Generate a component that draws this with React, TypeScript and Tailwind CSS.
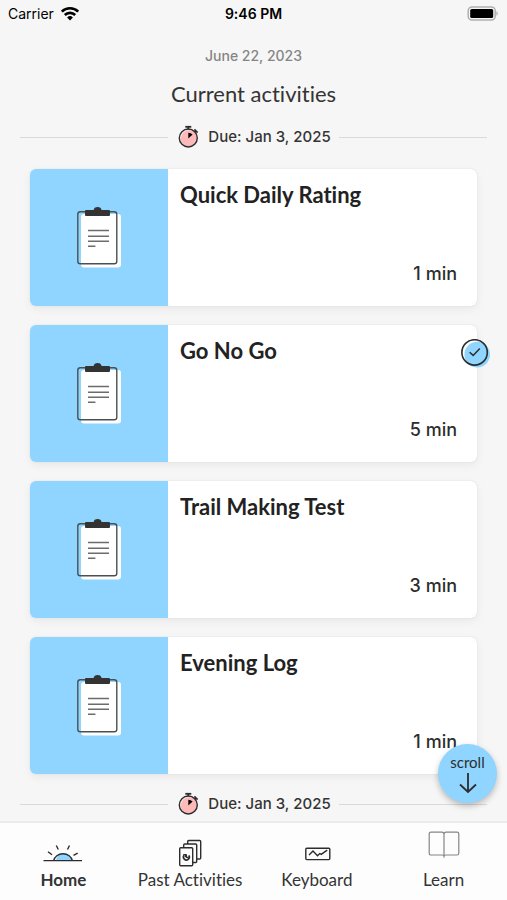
import React from 'react';
import clsx from 'clsx';

interface Activity {
  title: string;
  minutes: number;
  done?: boolean;
}

const activities: Activity[] = [
  { title: 'Quick Daily Rating', minutes: 1 },
  { title: 'Go No Go', minutes: 5, done: true },
  { title: 'Trail Making Test', minutes: 3 },
  { title: 'Evening Log', minutes: 1 },
];

const WifiIcon = () => (
  <svg className="w-5 h-4" viewBox="0 0 20 16" fill="none" stroke="#000" strokeWidth="2.6">
    <path d="M1.8 5.7a11.6 11.6 0 0 1 16.4 0" />
    <path d="M4.8 9a7.4 7.4 0 0 1 10.4 0" />
    <path d="M10 14.4 7.1 11.500a4.200 4.200 0 0 1 5.800 0z" fill="#000" stroke="none" />
  </svg>
);

const BatteryIcon = () => (
  <svg className="w-8 h-4" viewBox="0 0 32 16">
    <rect x="1.2" y="1" width="27" height="13" rx="3.8" fill="#f6f6f6" stroke="#b0b0b0" strokeWidth="1.5" />
    <rect x="3.2" y="3" width="23" height="9" rx="1.6" fill="#000" />
    <path d="M29.4 5.3c1.8.5 1.8 3.900 0 4.400z" fill="#b0b0b0" />
  </svg>
);

const StopwatchIcon = () => (
  <svg className="w-6 h-6" viewBox="0 0 24 24" fill="none">
    <circle cx="13" cy="13.500" r="8.300" fill="#ffb9b9" />
    <circle cx="12.300" cy="13" r="9" stroke="#2d2d2d" strokeWidth="1.4" />
    <path d="M9.300 1.800h6" stroke="#2d2d2d" strokeWidth="1.8" />
    <path d="M12.300 1.800v2.400M18.400 4.400l3.200 3.200M18.500 7l1.500-1.500" stroke="#2d2d2d" strokeWidth="1.7" />
    <path d="M12.300 13.400V7.800a6 6 0 0 1 4.300 1.800z" fill="#000" />
  </svg>
);

const ClipboardIcon = () => (
  <svg className="w-[46px] h-[62px]" viewBox="0 1 46 62" fill="none">
    <rect x="5" y="8" width="40" height="53.500" rx="3" fill="#fff" />
    <rect x="1.800" y="5.800" width="39" height="52" rx="2.600" stroke="#4a4f50" strokeWidth="1.4" />
    <path d="M10 4h7.6c.4-2 1.600-3 4-3s3.600 1 4 3H33a1 1 0 0 1 1 1v4a1 1 0 0 1-1 1H10a1 1 0 0 1-1-1V5a1 1 0 0 1 1-1z" fill="#333" />
    <path d="M12 24.500h21M12 30.200h21M12 35.300h21M12 40.300h7.400" stroke="#6c6c6c" strokeWidth="1.600" />
  </svg>
);

const DoneBadge = () => (
  <svg className="w-[30px] h-[30px]" viewBox="0 0 30 30" fill="none">
    <circle cx="16.200" cy="15.600" r="12.800" fill="#8fd5ff" />
    <circle cx="13.600" cy="13.400" r="12.700" stroke="#2d2d2d" strokeWidth="1.600" />
    <path d="m8.600 13.200 3.600 3.200 6.600-7" stroke="#2d2d2d" strokeWidth="1.500" />
  </svg>
);

const HomeIcon = () => (
  <svg className="w-10 h-7" viewBox="0 1 40 28" fill="none" stroke="#2d2d2d" strokeWidth="1.400">
    <path d="M13 22.400c.600-5 4-7 8-7s7 2.400 7.400 7z" fill="#8fd5ff" stroke="none" />
    <path d="M.500 22.600h38.500M10.700 22.600a9.400 8 0 0 1 18.600 0" />
    <path d="M5 13.700 9 16.700M13.300 7.500l2 4M26.500 7.500l-2 4M34.700 15.200l-4.200 2.200" />
  </svg>
);

const PastIcon = () => (
  <svg className="w-7 h-7" viewBox="0 0 28 28" fill="#fcfcfc" stroke="#2d2d2d" strokeWidth="1.400">
    <rect x="11.700" y="1.500" width="13" height="18.500" rx="1" />
    <rect x="7.700" y="5" width="13" height="18.500" rx="1" />
    <rect x="3.700" y="8.700" width="13" height="18" rx="1" />
    <path d="M12.800 16.400a2.900 2.900 0 1 1-4.700-.200" fill="none" strokeWidth="1.700" />
    <path d="M7.300 15.700h2.200v2.300M10.400 15.300v3h2.200" fill="none" strokeWidth="1.200" />
  </svg>
);

const KeyboardIcon = () => (
  <svg className="w-7 h-7" viewBox="0 0 28 28" fill="none" stroke="#2d2d2d" strokeWidth="1.400">
    <rect x="2.800" y="9.200" width="24" height="11.400" rx="1" />
    <path d="m6 16 4-4 4.500 4.800 2.300-2.300 1.400.800 6-4.200" />
  </svg>
);

const LearnIcon = () => (
  <svg className="w-8 h-7" viewBox="0 0 32 28" fill="none" stroke="#858585" strokeWidth="1.200">
    <path d="M16 26.500V3.500M16 25.200c-.3-1-.9-1.200-1.800-1.200H3c-1.200 0-1.800-.6-1.800-1.800V3c0-1.200.6-1.800 1.800-1.800h11c1.200 0 2 .8 2 2.300 0-1.500.8-2.300 2-2.300h11c1.200 0 1.800.6 1.800 1.800v19.200c0 1.200-.6 1.800-1.800 1.800H17.800c-.9 0-1.500.2-1.800 1.200z" />
  </svg>
);

const tabs = [
  { label: 'Home', icon: HomeIcon, active: true },
  { label: 'Past Activities', icon: PastIcon },
  { label: 'Keyboard', icon: KeyboardIcon },
  { label: 'Learn', icon: LearnIcon, raised: true },
];

const DueDivider: React.FC<{ date: string }> = ({ date }) => (
  <div className="flex items-center px-5">
    <span className="h-px flex-1 bg-[#dadada]" />
    <span className="flex items-center gap-2 px-2 text-[15px] leading-6 font-medium text-[#343434]">
      <StopwatchIcon />
      Due: {date}
    </span>
    <span className="h-px flex-1 bg-[#dadada]" />
  </div>
);

const ActivityCard: React.FC<{ activity: Activity }> = ({ activity }) => (
  <li className="relative">
    <a
      href="#"
      className="flex h-[137px] rounded-md bg-white overflow-hidden shadow-[0_0_1px_rgba(0,0,0,0.2),0_3px_10px_rgba(0,0,0,0.06)]"
    >
      <span className="w-[138px] shrink-0 flex items-center justify-center bg-[#8fd5ff]">
        <ClipboardIcon />
      </span>
      <span className="flex-1 flex flex-col justify-between pt-3 pb-5 pl-3 pr-5">
        <span className="font-[Lato,sans-serif] text-[22px] leading-7 font-bold text-[#222]">
          {activity.title}
        </span>
        <span className="text-right text-lg leading-6 font-medium text-[#2d2d2d]">
          {activity.minutes} min
        </span>
      </span>
    </a>
    {activity.done && (
      <span className="absolute top-3.5 -right-3.5">
        <DoneBadge />
      </span>
    )}
  </li>
);

export default function App() {
  return (
    <div className="relative h-screen flex flex-col bg-[#f6f6f6] font-[Inter,sans-serif] [font-variant-ligatures:none]">
      <header className="grid grid-cols-3 items-center px-2 pt-1 h-6 shrink-0 text-sm text-black">
        <span className="flex items-center gap-1.5">
          Carrier
          <WifiIcon />
        </span>
        <span className="text-center font-semibold">9:46 PM</span>
        <span className="flex justify-end">
          <BatteryIcon />
        </span>
      </header>

      <main className="flex-1 min-h-0 overflow-y-auto [scrollbar-width:none] pt-5">
        <p className="text-center text-sm leading-6 font-medium text-[#858585]">June 22, 2023</p>
        <h1 className="mt-3 mb-[17px] text-center font-[Lato,sans-serif] text-[22px] leading-7 text-[#343434]">
          Current activities
        </h1>
        <DueDivider date="Jan 3, 2025" />
        <ul className="flex flex-col gap-[19px] px-[30px] pt-5 pb-[18px]">
          {activities.map((activity) => (
            <ActivityCard key={activity.title} activity={activity} />
          ))}
        </ul>
        <DueDivider date="Jan 3, 2025" />
      </main>

      <nav className="relative shrink-0 grid grid-cols-4 border-t-2 border-[#ebebeb] bg-[#fdfdfd] pt-2 pb-2 font-[Lato,sans-serif]">
        {tabs.map(({ label, icon: Icon, active, raised }) => (
          <a
            key={label}
            href="#"
            className={clsx(
              'flex flex-col items-center text-[17px] leading-[25px] text-[#343434]',
              active && 'font-bold',
              raised ? 'gap-2' : 'pt-2'
            )}
          >
            <Icon />
            {label}
          </a>
        ))}
        <button
          type="button"
          className="absolute bottom-full right-2.5 mb-5 w-[59px] h-[59px] rounded-full bg-[#8fd5ff] flex flex-col items-center pt-2 font-[Lato,sans-serif] text-[15px] leading-5 text-[#2d2d2d] shadow-[0_3px_6px_rgba(0,0,0,0.25)]"
        >
          scroll
          <svg className="w-5 h-[22px]" viewBox="0 0 20 22" fill="none" stroke="#2d2d2d" strokeWidth="1.800">
            <path d="M10 1v19M2 12.500l8 7.500 8-7.500" />
          </svg>
        </button>
      </nav>
    </div>
  );
}
